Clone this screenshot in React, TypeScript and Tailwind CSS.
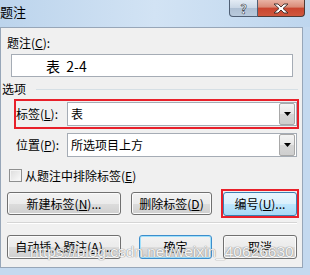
import React from 'react';

const btn =
  'flex items-center justify-center rounded-[3px] border border-[#707070] bg-[linear-gradient(#f2f2f2,#ebebeb_50%,#dddddd_50%,#cfcfcf)] shadow-[inset_0_0_0_1px_#fbfbfb] text-[12px] leading-[16px] text-black';

function Combo({ value }: { value: string }) {
  return (
    <div className="flex h-[24px] w-[230px] items-center border border-[#a5acb5] bg-white">
      <span className="flex-1 pl-[3px] text-[12px] leading-[16px]">{value}</span>
      <div className="mr-[1px] flex h-[22px] w-[16px] items-center justify-center rounded-[2px] border border-[#a8a8a8] bg-[linear-gradient(#f4f4f4,#e6e6e6_50%,#d6d6d6_50%,#cfcfcf)]">
        <svg width="7" height="4" viewBox="0 0 7 4">
          <path d="M0 0h7L3.5 4z" fill="#000" />
        </svg>
      </div>
    </div>
  );
}

export default function App() {
  return (
    <div
      className="relative h-[275px] w-[310px] overflow-hidden bg-[#c4d9ef] text-black"
      style={{ fontFamily: '"Noto Sans CJK SC", "Liberation Sans", sans-serif' }}
    >
      {/* Title bar */}
      <div className="flex h-[27px] bg-gradient-to-r from-[#bcd4ec] via-[#d2e3f4] to-[#bed6ee]">
        <div className="flex-1 pt-[4px] text-[13px] leading-[16px]">题注</div>
        <div className="mr-[5px] flex h-[17px] self-start">
          <div className="flex w-[29px] items-center justify-center rounded-bl-[4px] border border-t-0 border-[#4f5f74] bg-[linear-gradient(#e3ebf4,#c9d6e5_50%,#aebfd3_50%,#b9cadc)] text-[13px] font-bold leading-none text-white [-webkit-text-stroke:0.6px_#2d3440]">
            ?
          </div>
          <div className="flex w-[47px] items-center justify-center rounded-br-[4px] border border-l-0 border-t-0 border-[#4f3a36] bg-[linear-gradient(#e9b3a4,#d98a76_45%,#c9452f_50%,#d0583e)]">
            <svg width="16" height="11" viewBox="0 0 16 11">
              <path
                d="M1 1h4l3 3 3-3h4l-5 4.5 5 4.5h-4l-3-3-3 3H1l5-4.5z"
                fill="#fff"
                stroke="#3a2a28"
                strokeWidth="0.9"
                strokeLinejoin="round"
              />
            </svg>
          </div>
        </div>
      </div>

      {/* Dialog body */}
      <div className="h-[241px] w-[303px] border border-[#97a6b8] bg-[#f0f0f0]">
        <div className="ml-[6px] mt-[7px] text-[12px] leading-[16px]">
          题注(<u>C</u>):
        </div>
        <div className="ml-[10px] mt-[3px] flex h-[23px] w-[282px] items-center border border-[#a5acb5] bg-white pl-[34px] text-[14px] leading-[18px]">
          表&nbsp;&nbsp;2-4
        </div>

        <div className="mt-[4px] flex h-[16px] items-center">
          <span className="ml-[1px] text-[12px] leading-[16px]">选项</span>
          <div className="ml-[10px] mr-[4px] flex-1 border-t border-[#d5dfe5]" />
        </div>

        <div className="ml-[13px] mt-[2px] flex h-[30px] w-[285px] items-start border-2 border-[#e8202a]">
          <span className="mt-[5px] w-[51px] text-[12px] leading-[16px]">
            标签(<u>L</u>):
          </span>
          <div className="mt-[1px]">
            <Combo value="表" />
          </div>
        </div>

        <div className="ml-[15px] mt-[4px] flex items-center">
          <span className="w-[51px] text-[12px] leading-[16px]">
            位置(<u>P</u>):
          </span>
          <Combo value="所选项目上方" />
        </div>

        <div className="ml-[8px] mt-[12px] flex h-[13px] items-center">
          <div className="h-[13px] w-[13px] border border-[#8e8f8f] bg-[linear-gradient(135deg,#dcdcdc,#fbfbfb)] shadow-[inset_0_0_0_1px_#f4f4f4]" />
          <span className="ml-[3px] text-[12px] leading-[16px]">
            从题注中排除标签(<u>E</u>)
          </span>
        </div>

        <div className="ml-[6px] mt-[7px] flex h-[29px] items-center">
          <div className={`${btn} h-[23px] w-[114px]`}>
            新建标签(<u>N</u>)...
          </div>
          <div className={`${btn} ml-[10px] h-[23px] w-[81px]`}>
            删除标签(<u>D</u>)
          </div>
          <div className="ml-[9px] flex h-[29px] w-[78px] items-center justify-center border-2 border-[#e8202a]">
            <div className="flex h-[24px] w-[74px] items-center justify-center rounded-[3px] border border-[#3c7fb1] bg-[linear-gradient(#eaf6fd,#d9f0fc_50%,#bee6fd_50%,#a7d9f5)] text-[12px] leading-[16px]">
              编号(<u>U</u>)...
            </div>
          </div>
        </div>

        <div className="ml-[6px] mt-[4px] h-[2px] w-[290px] border-b border-t border-b-white border-t-[#d5d5d5]" />

        <div className="ml-[6px] mt-[11px] flex items-center">
          <div className={`${btn} h-[24px] w-[114px]`}>
            自动插入题注(<u>A</u>)...
          </div>
          <div className="ml-[18px] flex h-[24px] w-[73px] items-center justify-center rounded-[3px] border border-[#3c8dcc] bg-[linear-gradient(#f2f2f2,#ebebeb_50%,#dddddd_50%,#cfcfcf)] text-[12px] leading-[16px] shadow-[inset_0_0_0_1px_#9fe0fb]">
            确定
          </div>
          <div className={`${btn} ml-[11px] h-[24px] w-[74px]`}>取消</div>
        </div>
      </div>

      {/* watermark */}
      <div
        className="pointer-events-none absolute left-[30px] top-[243px] text-[15.5px] leading-[18px] text-white/90 [text-shadow:0_0_1px_#8a8a8a,0_0_1px_#8a8a8a]"
        style={{ fontFamily: '"Liberation Sans", sans-serif' }}
      >
        https://blog.csdn.net/weixin_40626630
      </div>
    </div>
  );
}
